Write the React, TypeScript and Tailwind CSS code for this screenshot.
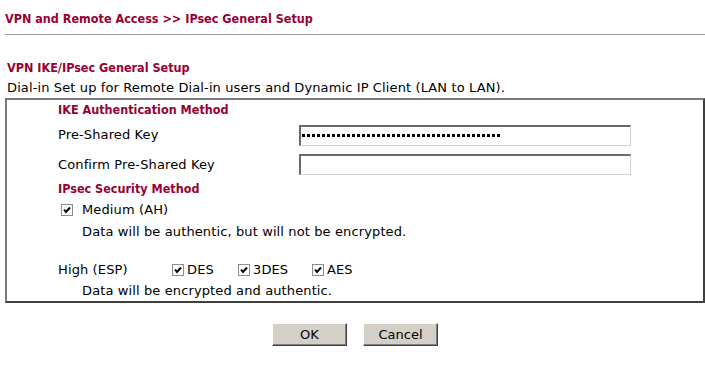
import React from 'react';

const Check = () => (
  <span className="inline-flex items-center justify-center w-[12px] h-[12px] border border-[#8c8c8c] bg-white shrink-0">
    <svg width="8" height="8" viewBox="0 0 8 8">
      <path d="M1 3.5 L3 6 L7 1.5" stroke="#000" strokeWidth="2" fill="none" />
    </svg>
  </span>
);

const Heading: React.FC<{ children: React.ReactNode }> = ({ children }) => (
  <div className="font-bold text-[12.5px] tracking-normal text-[#990033] [font-family:'DejaVu_Sans_Condensed','DejaVu_Sans',sans-serif]">
    {children}
  </div>
);

const SunkenInput: React.FC<{ dots?: number }> = ({ dots = 0 }) => (
  <div className="w-[332px] h-[21px] bg-white border-t-2 border-l-2 border-t-[#6a6a6a] border-l-[#6a6a6a] border-r border-b border-r-[#d4d0c8] border-b-[#d4d0c8] flex items-center pl-[1px] gap-[2px]">
    {Array.from({ length: dots }).map((_, i) => (
      <span key={i} className="w-[3px] h-[3px] bg-black" />
    ))}
  </div>
);

const Button: React.FC<{ label: string }> = ({ label }) => (
  <button className="w-[75px] h-[23px] bg-[#d4d0c8] text-[13px] tracking-normal text-black border border-t-white border-l-white border-r-[#404040] border-b-[#404040] shadow-[inset_-1px_-1px_0_#808080]">
    {label}
  </button>
);

export default function App() {
  return (
    <div className="w-[705px] h-[366px] bg-white text-black text-[13px] tracking-[0.12px] [font-family:'DejaVu_Sans',Verdana,sans-serif] pl-[5px] pt-[11px]">
      <div className="h-[16px] leading-[16px]">
        <Heading>VPN and Remote Access &gt;&gt; IPsec General Setup</Heading>
      </div>
      <div className="mt-[7px] h-px bg-[#a0a0a0]" />

      <div className="mt-[25px] pl-[2px] h-[16px] leading-[16px]">
        <Heading>VPN IKE/IPsec General Setup</Heading>
      </div>
      <div className="pl-[2px] h-[16px] leading-[16px] mt-[4px]">
        Dial-in Set up for Remote Dial-in users and Dynamic IP Client (LAN to LAN).
      </div>

      <div className="mt-[2px] h-[205px] border-2 border-t-[#7a7a7a] border-l-[#7a7a7a] border-r-[#404040] border-b-[#404040] pl-[51px]">
        <div className="h-[20px] flex items-center">
          <Heading>IKE Authentication Method</Heading>
        </div>
        <div className="h-[30px] flex items-center">
          <span className="w-[241px]">Pre-Shared Key</span>
          <SunkenInput dots={40} />
        </div>
        <div className="h-[29px] flex items-center">
          <span className="w-[241px]">Confirm Pre-Shared Key</span>
          <SunkenInput />
        </div>
        <div className="h-[20px] flex items-center">
          <Heading>IPsec Security Method</Heading>
        </div>
        <div className="h-[22px] flex items-center pl-[3px] gap-[9px]">
          <Check />
          <span>Medium (AH)</span>
        </div>
        <div className="h-[22px] flex items-center pl-[24px]">
          Data will be authentic, but will not be encrypted.
        </div>
        <div className="h-[16px]" />
        <div className="h-[22px] flex items-center">
          <span className="w-[114px]">High (ESP)</span>
          <span className="flex items-center gap-[3px] w-[66px]">
            <Check />
            <span>DES</span>
          </span>
          <span className="flex items-center gap-[3px] w-[74px]">
            <Check />
            <span>3DES</span>
          </span>
          <span className="flex items-center gap-[3px]">
            <Check />
            <span>AES</span>
          </span>
        </div>
        <div className="h-[20px] flex items-center pl-[24px]">
          Data will be encrypted and authentic.
        </div>
      </div>

      <div className="mt-[20px] flex justify-center gap-[16px]">
        <Button label="OK" />
        <Button label="Cancel" />
      </div>
    </div>
  );
}
